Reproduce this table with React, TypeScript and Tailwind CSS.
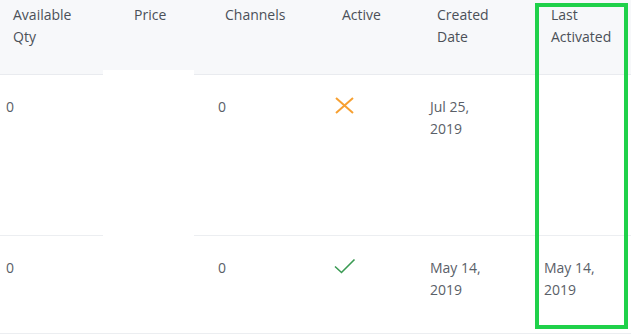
const cols = "grid-cols-[121px_91px_117px_95px_114px_93px]";

const headers = [
  ["Available", "Qty"],
  ["Price"],
  ["Channels"],
  ["Active"],
  ["Created", "Date"],
  ["Last", "Activated"],
];

function ActiveIcon({ active }: { active: boolean }) {
  return active ? (
    <svg width="22" height="18" viewBox="0 0 22 18" className="mt-[1px] -ml-[1px]" fill="none">
      <path d="M1 8.5 L7.5 14.5 L20.5 1.5" stroke="#3a9a53" strokeWidth="1.6" />
    </svg>
  ) : (
    <svg width="19" height="17" viewBox="0 0 19 17" className="mt-[1px]" fill="none">
      <path d="M1 1 L18 16 M18 1 L1 16" stroke="#f7a031" strokeWidth="2" />
    </svg>
  );
}

export default function App() {
  const rows = [
    { qty: "0", channels: "0", active: false, created: ["Jul 25,", "2019"], last: null, h: "h-[161px]" },
    { qty: "0", channels: "0", active: true, created: ["May 14,", "2019"], last: ["May 14,", "2019"], h: "h-[98px]" },
  ];

  return (
    <div className="relative w-[631px] h-[334px] overflow-hidden bg-white font-['Open_Sans',sans-serif] text-[14px] leading-[22px]">
      <div className={`grid ${cols} h-[75px] bg-[#f7f8fa] border-b border-[#e9ebef] text-[#4b5058]`}>
        {headers.map((h, i) => (
          <div key={i} className="pl-[13px] pt-[4px]">
            {h.map((l) => (
              <div key={l}>{l}</div>
            ))}
          </div>
        ))}
      </div>
      {rows.map((r, i) => (
        <div key={i} className={`grid ${cols} ${r.h} border-b border-[#eceef1] text-[#5a6068]`}>
          <div className="pl-[6px] pt-[21px]">{r.qty}</div>
          <div />
          <div className="pl-[6px] pt-[21px]">{r.channels}</div>
          <div className="pl-[6px] pt-[21px]">
            <ActiveIcon active={r.active} />
          </div>
          <div className="pl-[6px] pt-[21px]">
            {r.created.map((l) => (
              <div key={l}>{l}</div>
            ))}
          </div>
          <div className="pl-[6px] pt-[21px]">
            {r.last?.map((l) => (
              <div key={l}>{l}</div>
            ))}
          </div>
        </div>
      ))}
      {/* redacted price column */}
      <div className="absolute left-[103px] top-[70px] w-[91px] h-[170px] bg-white" />
      {/* highlight box */}
      <div className="absolute left-[535px] top-[3px] w-[93px] h-[326px] border-4 border-[#1fd14a]" />
    </div>
  );
}
